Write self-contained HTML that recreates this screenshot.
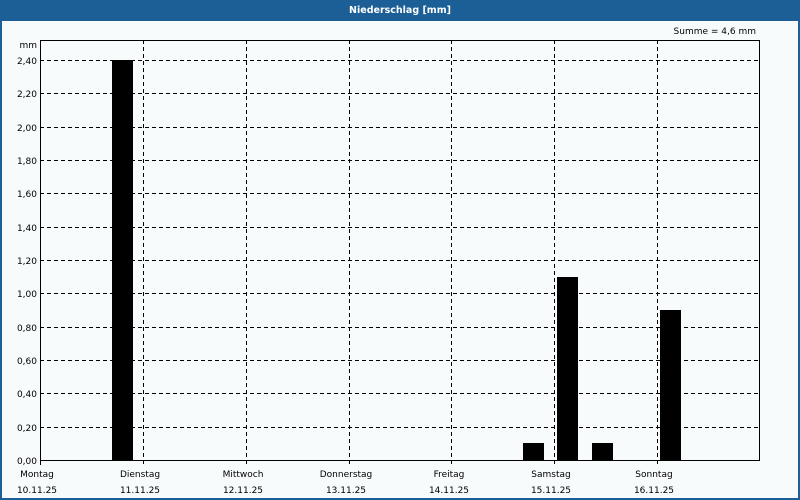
<!DOCTYPE html>
<html><head><style>
html,body{margin:0;padding:0;width:800px;height:500px;overflow:hidden;background:#1b5f96}
svg{display:block}
text{font-family:"DejaVu Sans","Liberation Sans",sans-serif;font-size:9px;fill:#000}
</style></head><body>
<svg width="800" height="500" xmlns="http://www.w3.org/2000/svg">
<rect x="0" y="0" width="800" height="500" fill="#1b5f96"/>
<rect x="2" y="21" width="796" height="477" fill="#f7fbfc"/>
<text x="400" y="13" text-anchor="middle" style="fill:#fff;font-weight:bold;font-size:9.5px">Niederschlag [mm]</text>
<text x="756" y="34" text-anchor="end">Summe = 4,6 mm</text>
<text x="37" y="48" text-anchor="end">mm</text>
<g stroke="#000" stroke-width="1" stroke-dasharray="4,3" fill="none">
<path d="M40 60.5H760M40 93.5H760M40 127.5H760M40 160.5H760M40 193.5H760M40 227.5H760M40 260.5H760M40 293.5H760M40 327.5H760M40 360.5H760M40 393.5H760M40 427.5H760"/>
<path d="M143.5 40V465M246.5 40V465M349.5 40V465M451.5 40V465M554.5 40V465M657.5 40V465"/>
</g>
<path d="M40.5 40.5H759.5V460.5H40.5Z" stroke="#000" fill="none"/>
<path d="M40.5 460V465" stroke="#000"/>
<g fill="#000">
<rect x="112" y="60" width="21" height="400"/>
<rect x="523" y="443" width="21" height="17"/>
<rect x="557" y="277" width="21" height="183"/>
<rect x="592" y="443" width="21" height="17"/>
<rect x="660" y="310" width="21" height="150"/>
</g>
<g text-anchor="end">
<text x="37" y="64">2,40</text><text x="37" y="97">2,20</text><text x="37" y="131">2,00</text>
<text x="37" y="164">1,80</text><text x="37" y="197">1,60</text><text x="37" y="231">1,40</text>
<text x="37" y="264">1,20</text><text x="37" y="297">1,00</text><text x="37" y="331">0,80</text>
<text x="37" y="364">0,60</text><text x="37" y="397">0,40</text><text x="37" y="431">0,20</text>
<text x="37" y="464">0,00</text>
</g>
<g text-anchor="middle">
<text x="37" y="477">Montag</text><text x="37" y="493">10.11.25</text>
<text x="140" y="477">Dienstag</text><text x="140" y="493">11.11.25</text>
<text x="243" y="477">Mittwoch</text><text x="243" y="493">12.11.25</text>
<text x="346" y="477">Donnerstag</text><text x="346" y="493">13.11.25</text>
<text x="449" y="477">Freitag</text><text x="449" y="493">14.11.25</text>
<text x="551" y="477">Samstag</text><text x="551" y="493">15.11.25</text>
<text x="654" y="477">Sonntag</text><text x="654" y="493">16.11.25</text>
</g>
</svg>
</body></html>
